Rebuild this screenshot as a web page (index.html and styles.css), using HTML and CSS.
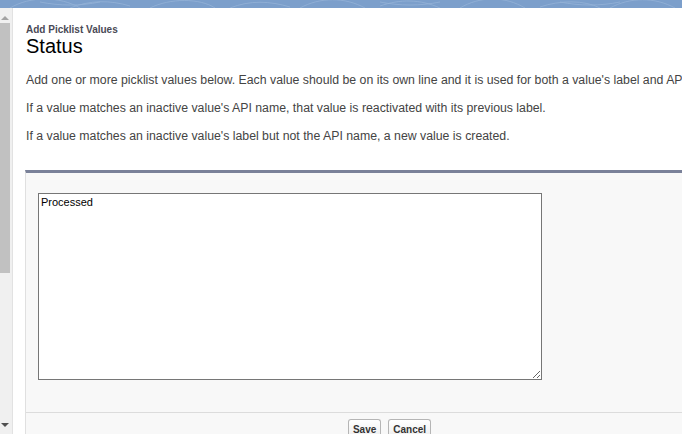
FILE: index.html
```html
<!DOCTYPE html>
<html>
<head>
<meta charset="utf-8">
<link rel="stylesheet" href="styles.css">
</head>
<body>
<div class="band">
  <svg width="682" height="8" viewBox="0 0 682 8" xmlns="http://www.w3.org/2000/svg">
    <rect width="682" height="8" fill="#7c9fcb"/>
    <g fill="none" stroke="#9bb7da" stroke-width="0.8" opacity="0.8">
      <path d="M10 8 C30 -4 60 -4 80 8"/>
      <path d="M70 8 C90 0 110 0 130 6"/>
      <path d="M150 8 C170 -2 200 -2 215 8"/>
      <path d="M230 8 C250 0 270 1 290 7"/>
      <path d="M300 8 C320 -3 345 -3 365 8"/>
      <path d="M380 6 C400 -1 420 -1 440 8"/>
      <path d="M460 8 C480 -4 505 -4 525 8"/>
      <path d="M540 7 C560 0 585 0 600 8"/>
      <path d="M610 8 C630 -3 655 -3 675 8"/>
      <path d="M380 2 C400 6 420 6 440 2"/>
      <path d="M40 2 C60 6 80 6 100 2"/>
      <path d="M560 2 C580 6 600 6 620 2"/>
    </g>
  </svg>
</div>
<div class="frame">
  <div class="scrollbar">
    <span class="arrow up"></span>
    <div class="thumb"></div>
    <span class="arrow down"></span>
  </div>
  <div class="main">
    <div class="header">
      <div class="page-type">Add Picklist Values</div>
      <h1 class="page-title">Status</h1>
    </div>
    <div class="intro">
      <p>Add one or more picklist values below. Each value should be on its own line and it is used for both a value's label and API name.</p>
      <p>If a value matches an inactive value's API name, that value is reactivated with its previous label.</p>
      <p>If a value matches an inactive value's label but not the API name, a new value is created.</p>
    </div>
    <div class="panel">
      <div class="panel-body">
        <textarea class="values">Processed</textarea>
      </div>
      <div class="panel-buttons">
        <button class="btn">Save</button>
        <button class="btn">Cancel</button>
      </div>
    </div>
  </div>
</div>
</body>
</html>
```
FILE: styles.css
```css
html, body {
  margin: 0;
  padding: 0;
}
body {
  width: 682px;
  height: 434px;
  overflow: hidden;
  background: #ffffff;
  font-family: Arial, "Liberation Sans", sans-serif;
  color: #3e3e3e;
}
.band {
  height: 8px;
  line-height: 0;
}
.band svg {
  display: block;
}
.frame {
  display: flex;
  height: 426px;
}
.scrollbar {
  position: relative;
  flex: none;
  width: 12px;
  height: 426px;
  background: #f0f0f0;
  border-right: 1px solid #e2e2e2;
}
.thumb {
  position: absolute;
  left: 0;
  top: 15px;
  width: 10px;
  height: 250px;
  background: #c1c1c1;
}
.arrow {
  position: absolute;
  left: 1px;
  width: 0;
  height: 0;
  border-left: 4px solid transparent;
  border-right: 4px solid transparent;
}
.arrow.up {
  top: 8px;
  border-bottom: 4px solid #a3a3a3;
}
.arrow.down {
  top: 415px;
  border-top: 4px solid #505050;
}
.main {
  flex: none;
  width: 728px;
  padding-left: 12px;
}
.header {
  padding: 17px 0 0 1px;
}
.page-type {
  font-size: 10px;
  line-height: 10px;
  font-weight: bold;
  color: #4a4a56;
}
.page-title {
  margin: 1px 0 0 0;
  font-size: 20px;
  line-height: 20px;
  font-weight: normal;
  color: #000000;
}
.intro {
  padding: 17px 0 0 1px;
}
.intro p {
  margin: 0 0 13px 0;
  font-size: 12.3px;
  line-height: 15px;
  white-space: nowrap;
  color: #444444;
}
.intro p:last-child {
  margin-bottom: 0;
}
.panel {
  margin-top: 26px;
  background: #f8f8f8;
  border-top: 3px solid #7a8199;
  border-left: 1px solid #e0e0e0;
}
.panel-body {
  padding: 20px 12px 32px 12px;
}
.values {
  display: block;
  box-sizing: border-box;
  width: 504px;
  height: 187px;
  margin: 0;
  padding: 2px;
  border: 1px solid #767676;
  border-radius: 0;
  background: #ffffff;
  font-family: Arial, "Liberation Sans", sans-serif;
  font-size: 11px;
  color: #000000;
  resize: both;
}
.panel-buttons {
  border-top: 1px solid #dcdcdc;
  padding-top: 6px;
  display: flex;
  justify-content: center;
  gap: 7px;
}
.btn {
  margin: 0;
  height: 20px;
  padding: 0 4px;
  border: 1px solid #b5b5b5;
  border-bottom-color: #7f7f7f;
  border-radius: 3px;
  background: linear-gradient(#ffffff, #ededed);
  font-family: Arial, "Liberation Sans", sans-serif;
  font-size: 10px;
  font-weight: bold;
  color: #333333;
}
```
